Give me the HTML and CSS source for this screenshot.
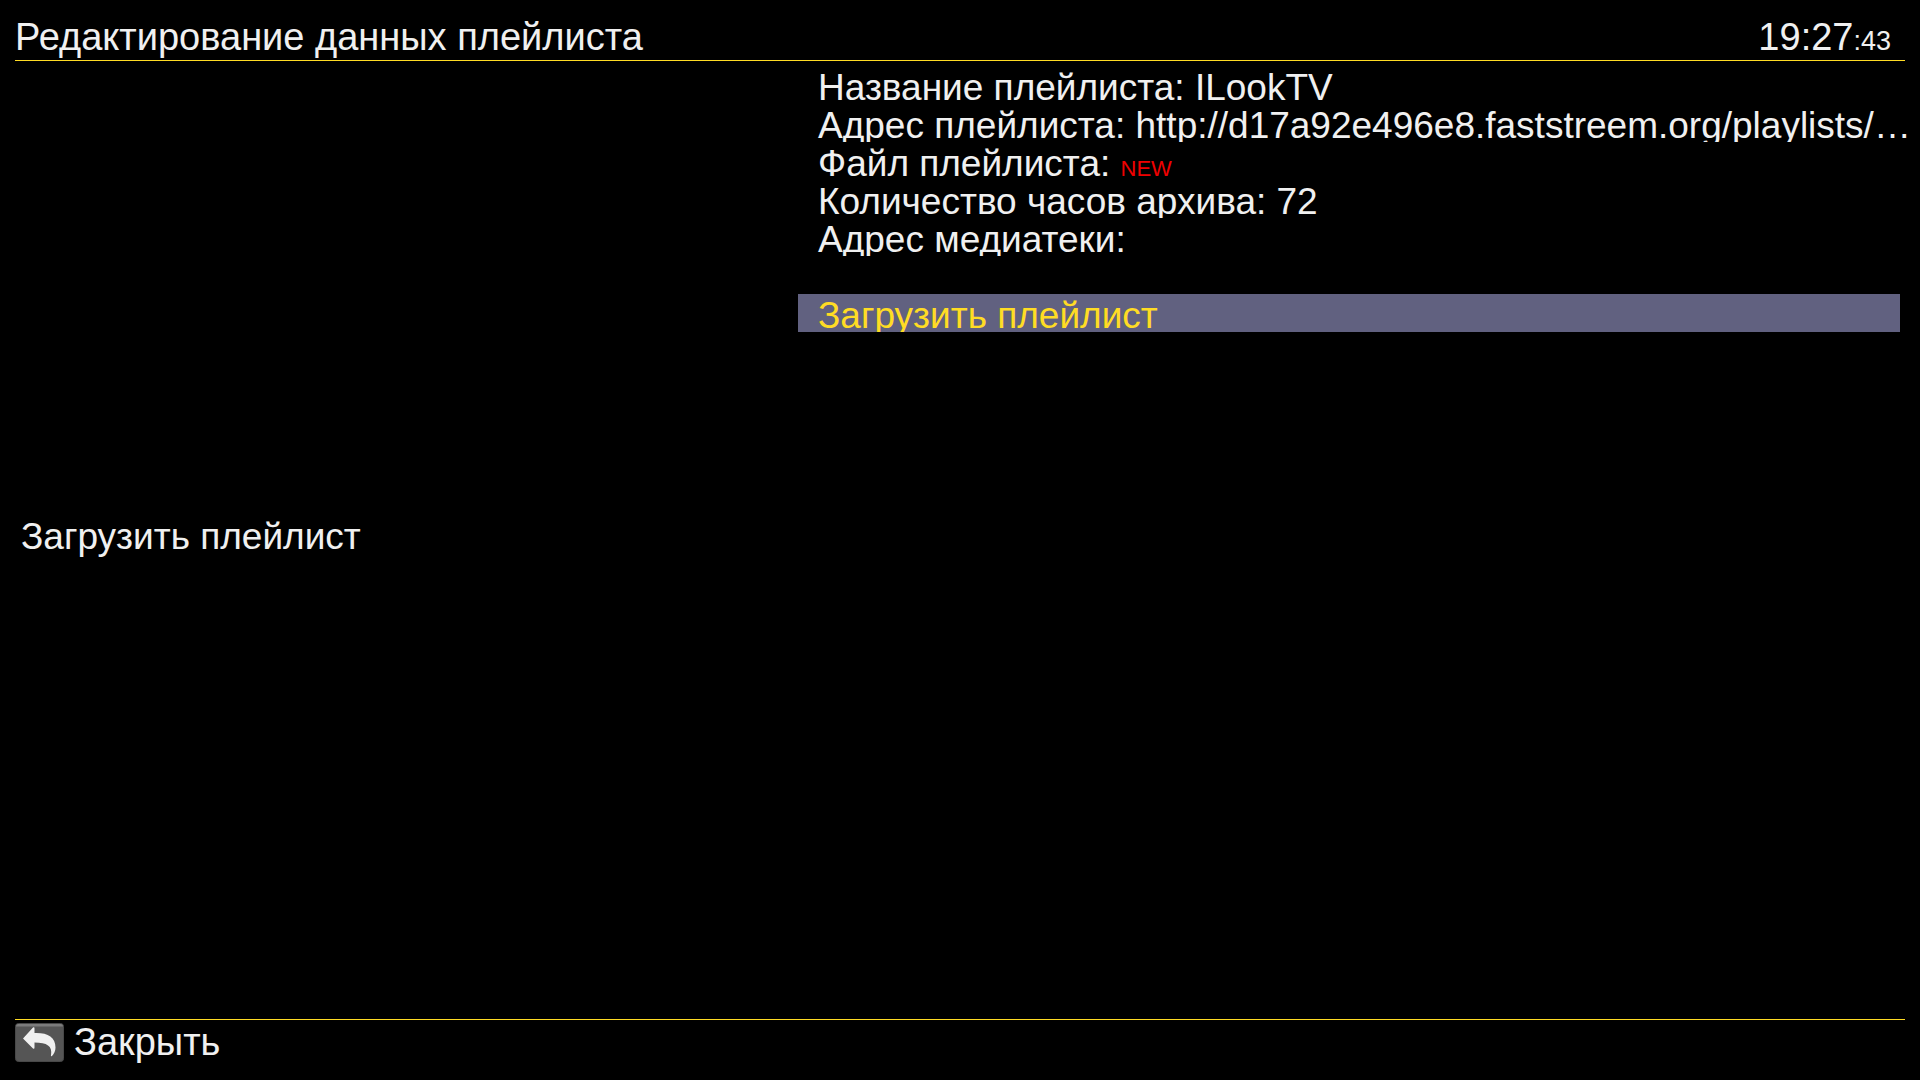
FILE: index.html
```
<!DOCTYPE html>
<html lang="ru">
<head>
<meta charset="utf-8">
<title>Редактирование данных плейлиста</title>
<link rel="stylesheet" href="styles.css">
</head>
<body>
<div class="screen">
  <header class="header">
    <h1 class="title">Редактирование данных плейлиста</h1>
    <time class="clock">19:27<span class="seconds">:43</span></time>
  </header>
  <main class="main">
    <p class="hint">Загрузить плейлист</p>
    <ul class="menu">
      <li><button class="item" type="button">Название плейлиста: ILookTV</button></li>
      <li><button class="item" type="button">Адрес плейлиста: http://d17a92e496e8.faststreem.org/playlists/…</button></li>
      <li><button class="item" type="button">Файл плейлиста: <span class="badge">NEW</span></button></li>
      <li><button class="item" type="button">Количество часов архива: 72</button></li>
      <li><button class="item" type="button">Адрес медиатеки:</button></li>
      <li class="spacer"></li>
      <li><button class="item selected" type="button">Загрузить плейлист</button></li>
    </ul>
  </main>
  <footer class="footer">
    <button class="close" type="button">
      <svg class="key" viewBox="0 0 49 39" aria-hidden="true">
        <rect x="0.5" y="0.5" width="48" height="38" rx="3" fill="#555" stroke="#484848"/>
        <path d="M1 3.500Q1 1 3.500 1h42Q48 1 48 3.500H1z" fill="#7c7c7c"/>
        <path d="M8 15.500 18 4.500q1.500-1 1.500 1v4.500c13-.5 21 4 21 14.500 0 3.500-1.500 6.500-3.500 8.500-1 .5-1.200 0-1-1 1.500-9-4-12.500-16.500-12.500v5q0 2-1.500 1z" fill="#f0f0f0"/>
      </svg>
      Закрыть
    </button>
  </footer>
</div>
</body>
</html>
```
FILE: styles.css
```
* { box-sizing: border-box; }
body {
  margin: 0;
  background: #000;
  color: #f0f0f0;
  font-family: "Liberation Sans", Arial, sans-serif;
  font-size: 37px;
}
button {
  border: 0;
  background: none;
  color: inherit;
  font: inherit;
  text-align: left;
}
.screen {
  display: flex;
  flex-direction: column;
  min-height: 100vh;
  padding: 0 15px;
}
.header {
  display: flex;
  justify-content: space-between;
  align-items: baseline;
  padding: 16px 14px 1px 0;
  border-bottom: 1px solid #ffdc24;
  font-size: 38px;
  line-height: 43px;
}
.title { margin: 0; font-size: 38px; font-weight: 400; }
.seconds { font-size: 27px; line-height: 1; }
.main {
  flex: 1;
  display: grid;
  grid-template-columns: 783fr 1102fr;
  padding: 5px 5px 0 0;
}
.hint {
  align-self: center;
  margin: 0 6px;
  padding-bottom: 12px;
  line-height: 42px;
}
.menu { min-width: 0; margin: 0; padding: 0; list-style: none; }
.item {
  display: block;
  width: 100%;
  height: 38px;
  padding: 0 0 0 20px;
  line-height: 44px;
  white-space: nowrap;
  overflow-x: visible;
  overflow-y: clip;
}
.spacer { height: 38px; }
.selected { background: #616180; color: #ffdc24; }
.badge { color: #f00000; font-size: 22px; line-height: 1; }
.footer { height: 61px; border-top: 1px solid #ffdc24; }
.close {
  display: flex;
  align-items: center;
  gap: 10px;
  padding: 1px 0;
  font-size: 38px;
  line-height: 43px;
}
.key { width: 49px; height: 39px; }
```
